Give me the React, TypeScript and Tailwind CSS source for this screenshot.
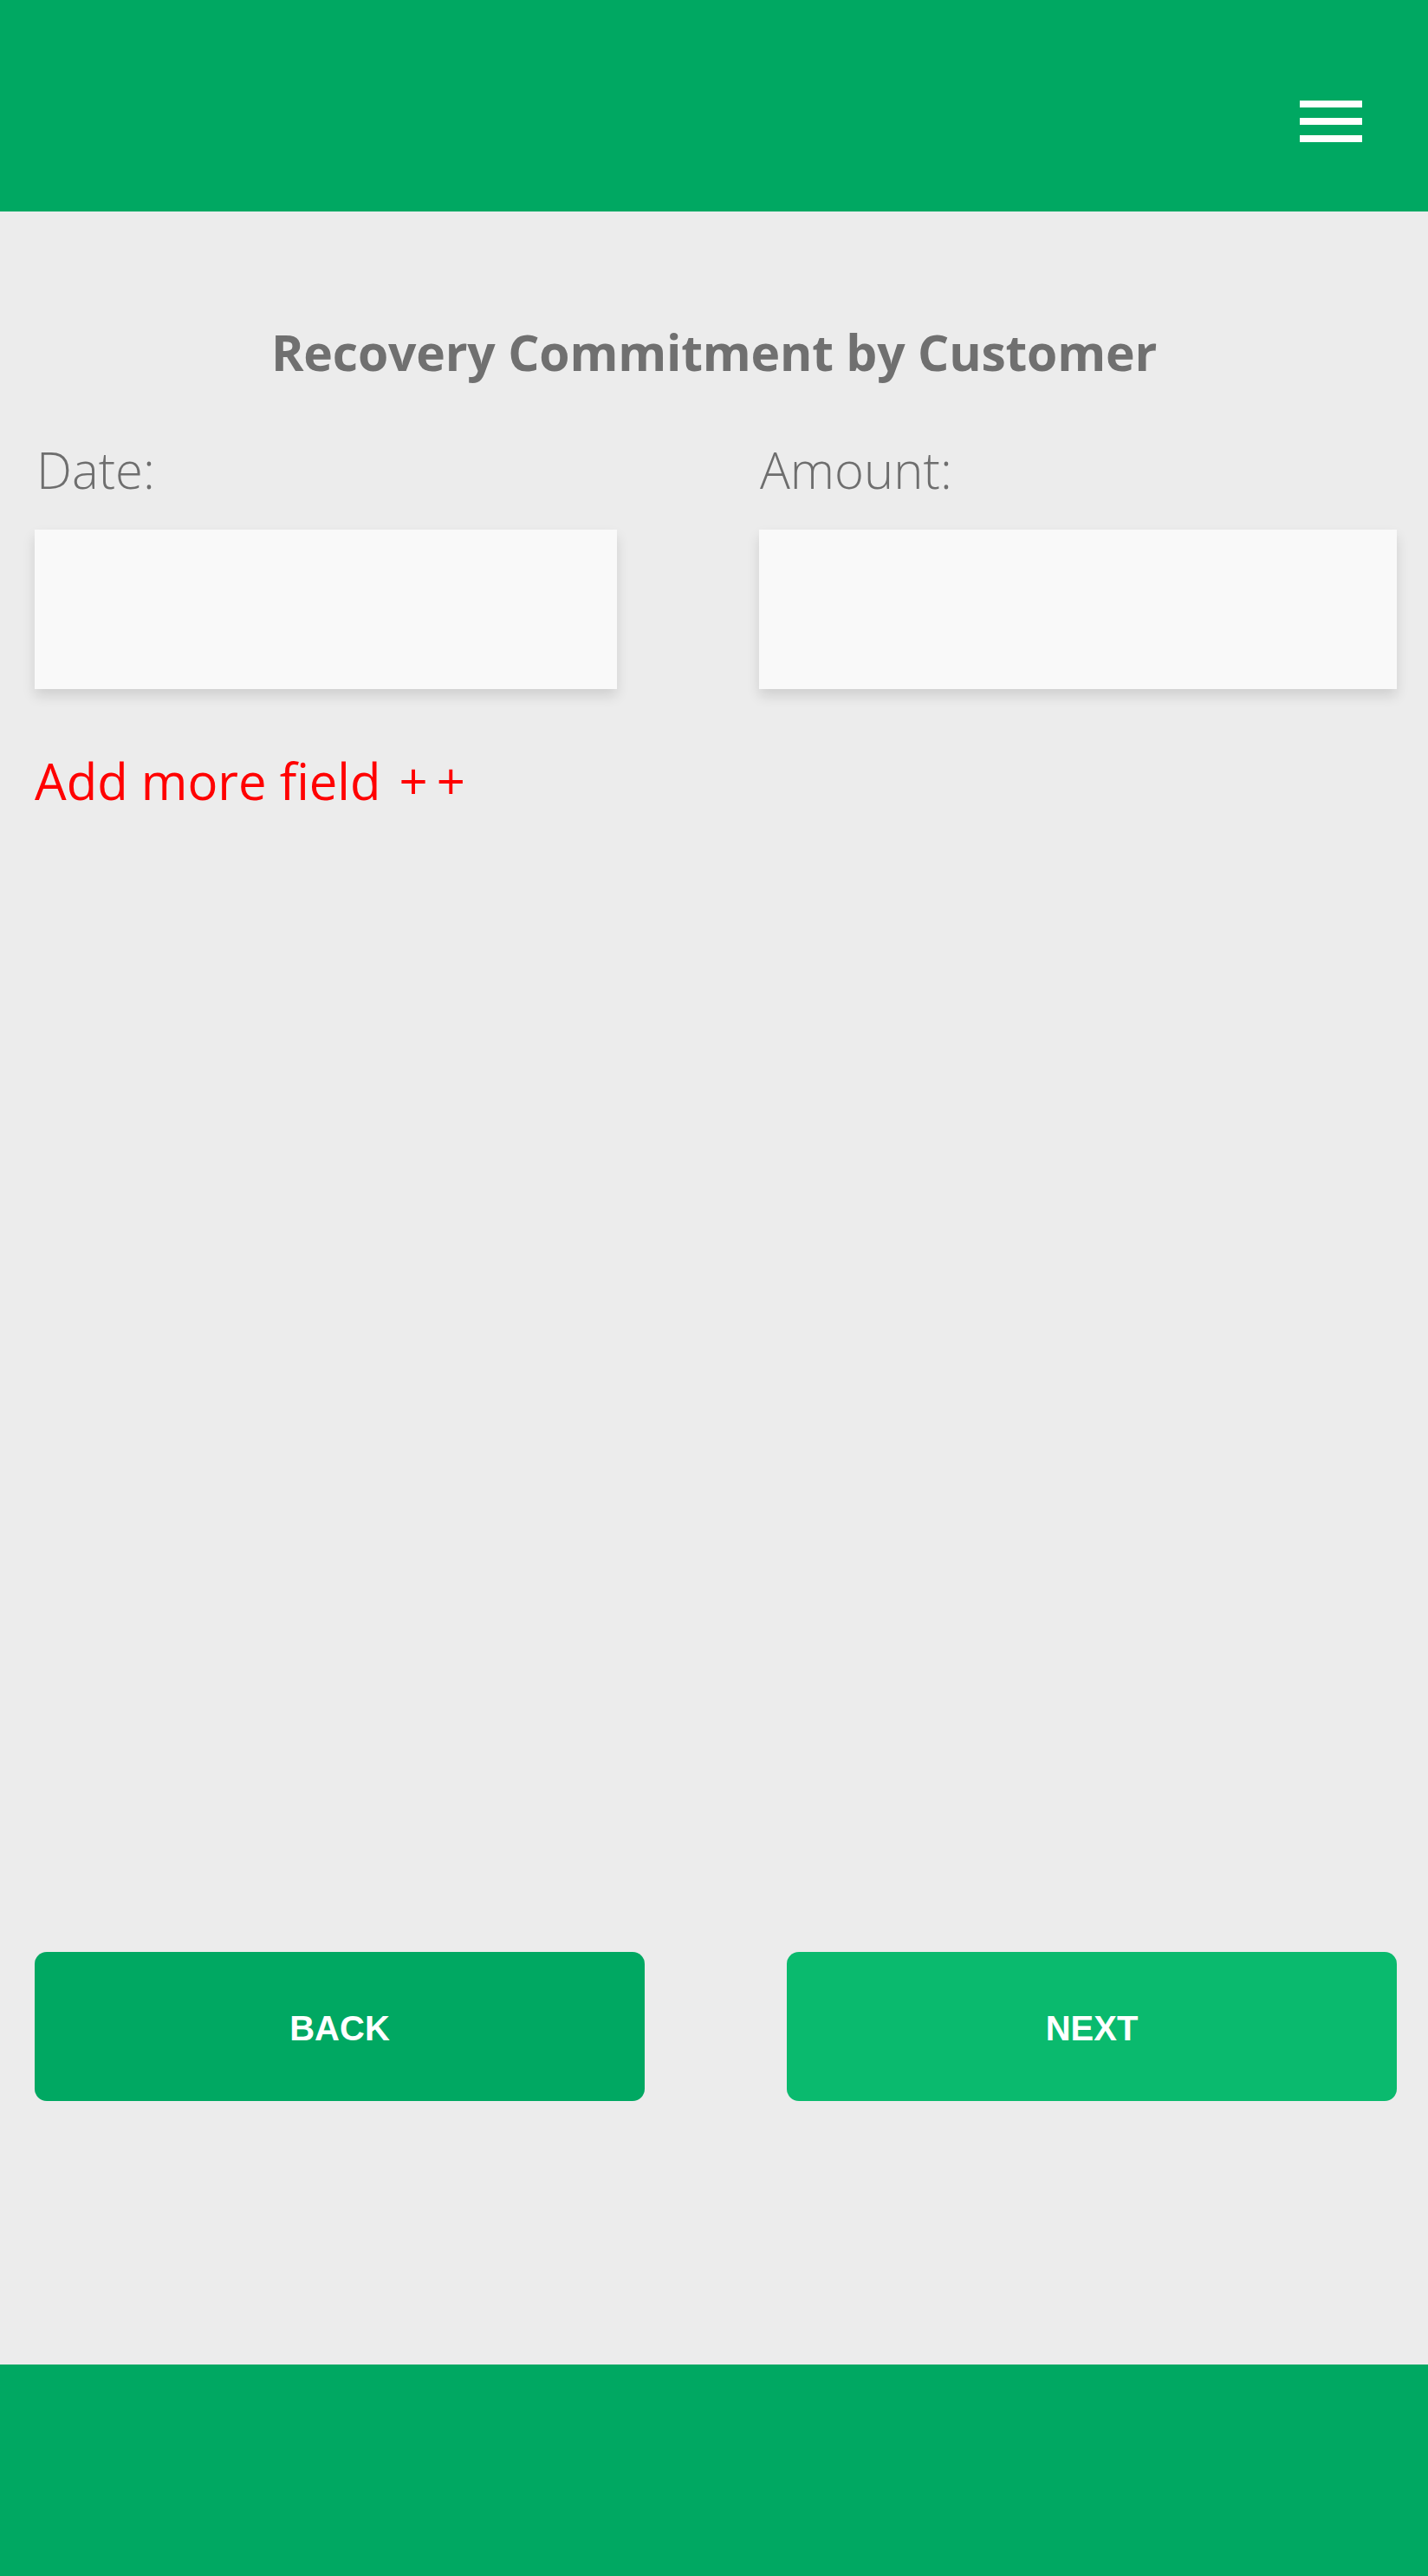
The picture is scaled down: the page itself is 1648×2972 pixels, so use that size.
import React from "react";

export default function App() {
  const font = { fontFamily: '"Open Sans", "Noto Sans", sans-serif' };
  const btnFont = { fontFamily: '"Liberation Sans", Arial, sans-serif' };
  return (
    <div className="flex h-[2972px] w-full flex-col bg-[#ececec]" style={font}>
      <header className="relative h-[244px] shrink-0 bg-[#00a862]">
        <button className="absolute left-[1500px] top-[116px] flex w-[72px] flex-col gap-[12px]" aria-label="menu">
          <span className="block h-[8px] w-[72px] bg-white" />
          <span className="block h-[8px] w-[72px] bg-white" />
          <span className="block h-[8px] w-[72px] bg-white" />
        </button>
      </header>
      <main className="flex flex-1 flex-col pt-[124px]">
        <h1 className="text-center text-[57px] font-bold leading-[76px] tracking-[-0.2px] text-[#707070]">
          Recovery Commitment by Customer
        </h1>
        <div className="mt-[60px] flex">
          <div className="ml-[40px] w-[672px]">
            <div className="pl-[2px] text-[58px] font-light leading-[76px] text-[#6e6e6e]">Date:</div>
            <div className="mt-[31px] h-[184px] bg-[#f9f9f9] shadow-[0_8px_14px_rgba(0,0,0,0.12)]" />
          </div>
          <div className="ml-[164px] w-[736px]">
            <div className="pl-[1px] text-[58px] font-light leading-[76px] text-[#6e6e6e]">Amount:</div>
            <div className="mt-[31px] h-[184px] bg-[#f9f9f9] shadow-[0_8px_14px_rgba(0,0,0,0.12)]" />
          </div>
        </div>
        <div className="ml-[40px] mt-[68px] text-[58px] font-normal leading-[76px] text-[#ff0000]">
          Add more field <span className="ml-[6px] tracking-[10px]">+</span>+
        </div>
        <div className="mt-[1313px] flex px-[36px]">
          <button className="ml-[4px] flex h-[172px] w-[704px] items-center justify-center rounded-[14px] bg-[#00a862] pt-[4px] text-[40px] font-bold text-white" style={btnFont}>
            BACK
          </button>
          <button className="ml-[164px] flex h-[172px] w-[704px] items-center justify-center rounded-[14px] bg-[#0aba6e] pt-[4px] text-[40px] font-bold text-white" style={btnFont}>
            NEXT
          </button>
        </div>
      </main>
      <footer className="h-[244px] shrink-0 bg-[#00a862]" />
    </div>
  );
}
